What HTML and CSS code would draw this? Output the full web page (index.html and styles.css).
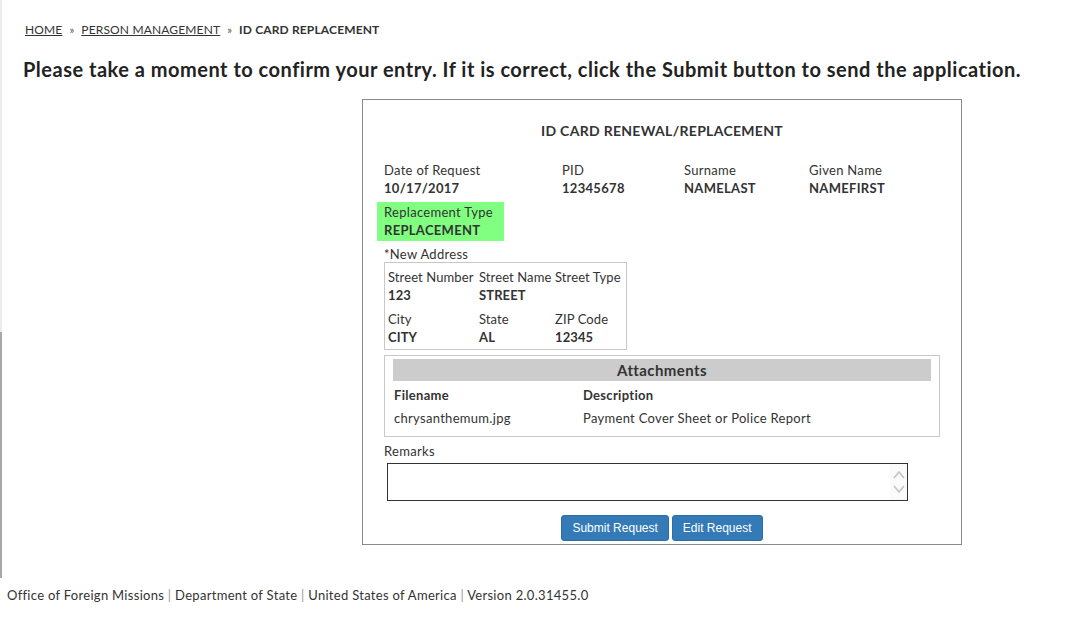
FILE: index.html
```html
<!DOCTYPE html>
<html>
<head>
<meta charset="utf-8">
<link rel="stylesheet" href="styles.css">
</head>
<body>
<div class="page">
  <nav class="breadcrumb">
    <a href="#">HOME</a><span class="sep">»</span><a href="#">PERSON MANAGEMENT</a><span class="sep">»</span><strong>ID CARD REPLACEMENT</strong>
  </nav>
  <h1 class="intro">Please take a moment to confirm your entry. If it is correct, click the Submit button to send the application.</h1>

  <section class="card">
    <h2 class="card-title">ID CARD RENEWAL/REPLACEMENT</h2>
    <div class="info-row">
      <div class="field"><div class="lbl">Date of Request</div><div class="val">10/17/2017</div></div>
      <div class="field"><div class="lbl">PID</div><div class="val">12345678</div></div>
      <div class="field"><div class="lbl">Surname</div><div class="val">NAMELAST</div></div>
      <div class="field"><div class="lbl">Given Name</div><div class="val">NAMEFIRST</div></div>
    </div>
    <div class="highlight">
      <div class="lbl">Replacement Type</div>
      <div class="val">REPLACEMENT</div>
    </div>
    <div class="addr-caption">*New Address</div>
    <div class="addr-box">
      <div class="lbl">Street Number</div><div class="lbl">Street Name</div><div class="lbl">Street Type</div>
      <div class="val">123</div><div class="val">STREET</div><div class="val"></div>
      <div class="lbl gap">City</div><div class="lbl gap">State</div><div class="lbl gap">ZIP Code</div>
      <div class="val">CITY</div><div class="val">AL</div><div class="val">12345</div>
    </div>
    <div class="attach-box">
      <div class="attach-head">Attachments</div>
      <div class="attach-grid">
        <div class="th">Filename</div><div class="th">Description</div>
        <div class="td">chrysanthemum.jpg</div><div class="td">Payment Cover Sheet or Police Report</div>
      </div>
    </div>
    <div class="remarks-lbl">Remarks</div>
    <div class="remarks-wrap">
      <textarea class="remarks"></textarea>
      <div class="scroll">
        <svg width="14" height="12" viewBox="0 0 14 12"><path d="M2 9 L7 3 L12 9" fill="none" stroke="#c4c4c4" stroke-width="1.6"/></svg>
        <svg width="14" height="12" viewBox="0 0 14 12"><path d="M2 3 L7 9 L12 3" fill="none" stroke="#c4c4c4" stroke-width="1.6"/></svg>
      </div>
    </div>
    <div class="actions">
      <button class="btn">Submit Request</button>
      <button class="btn">Edit Request</button>
    </div>
  </section>

  <footer class="footer">
    Office of Foreign Missions <span class="bar">|</span> Department of State <span class="bar">|</span> United States of America <span class="bar">|</span> Version 2.0.31455.0
  </footer>
</div>
</body>
</html>
```

FILE: styles.css
```css
html {
  background:
    linear-gradient(#ececec, #ececec) 0 0 / 2px 332px no-repeat,
    linear-gradient(#a8a8a8, #a8a8a8) 0 332px / 2px 246px no-repeat,
    #fff;
}
body {
  margin: 0;
  font-family: Lato, "Open Sans", sans-serif;
  color: #333;
  font-size: 13px;
  letter-spacing: 0.3px;
}
.page {
  display: flex;
  flex-direction: column;
}
.breadcrumb {
  margin: 21px 0 0 25px;
  font-size: 12px;
  line-height: 18px;
  color: #333;
  letter-spacing: 0.15px;
}
.breadcrumb a {
  color: #333;
  text-decoration: underline;
}
.breadcrumb .sep {
  margin: 0 7px;
  font-size: 11px;
  color: #555;
}
.breadcrumb strong {
  font-weight: 700;
}
.intro {
  margin: 18px 0 0 23px;
  font-size: 20px;
  line-height: 24px;
  font-weight: 700;
  color: #222;
  letter-spacing: 0.5px;
}
.card {
  margin: 18px 0 0 362px;
  width: 600px;
  box-sizing: border-box;
  border: 1px solid #8a8a8a;
  padding: 22px 21px 3px 21px;
}
.card-title {
  margin: 0;
  text-align: center;
  font-size: 14px;
  line-height: 18px;
  font-weight: 700;
  letter-spacing: 0.3px;
}
.lbl {
  font-size: 13px;
  line-height: 18px;
}
.val {
  font-size: 13px;
  line-height: 18px;
  font-weight: 700;
  min-height: 18px;
}
.info-row {
  margin-top: 21px;
  display: grid;
  grid-template-columns: 178px 122px 125px 1fr;
}
.highlight {
  margin: 5px 0 0 -7px;
  width: 127px;
  box-sizing: border-box;
  padding: 1px 7px 2px;
  background: #80ff80;
}
.addr-caption {
  margin-top: 5px;
  line-height: 16px;
}
.addr-box {
  width: 243px;
  box-sizing: border-box;
  border: 1px solid #c8c8c8;
  padding: 5px 3px 3px;
  display: grid;
  grid-template-columns: 91px 76px 1fr;
  white-space: nowrap;
  letter-spacing: 0.1px;
}
.addr-box .gap {
  margin-top: 6px;
}
.attach-box {
  margin-top: 5px;
  border: 1px solid #c8c8c8;
  padding: 3px 8px 9px;
}
.attach-head {
  background: #cccccc;
  text-align: center;
  font-weight: 700;
  font-size: 15px;
  line-height: 22px;
  letter-spacing: 0.4px;
}
.attach-grid {
  margin-top: 5px;
  display: grid;
  grid-template-columns: 189px 1fr;
  padding-left: 1px;
  row-gap: 5px;
}
.th {
  font-weight: 700;
  line-height: 18px;
}
.td {
  line-height: 18px;
}
.remarks-lbl {
  margin-top: 5px;
  line-height: 18px;
}
.remarks-wrap {
  position: relative;
  margin: 3px 0 0 3px;
  width: 521px;
  height: 38px;
}
.remarks {
  display: block;
  width: 100%;
  height: 100%;
  box-sizing: border-box;
  border: 1px solid #333;
  resize: none;
  overflow: hidden;
  margin: 0;
  font-family: inherit;
}
.scroll {
  position: absolute;
  right: 1px;
  top: 1px;
  bottom: 1px;
  width: 17px;
  background: #fafafa;
  display: flex;
  flex-direction: column;
  align-items: center;
  justify-content: center;
  gap: 2px;
}
.scroll svg {
  display: block;
}
.actions {
  margin-top: 14px;
  display: flex;
  justify-content: center;
  gap: 3px;
}
.btn {
  font-family: "Liberation Sans", Arial, sans-serif;
  font-size: 12px;
  letter-spacing: 0;
  color: #fff;
  background: #337ab7;
  border: 1px solid #2e6da4;
  border-radius: 3px;
  height: 26px;
  padding: 0 10px;
}
.footer {
  margin: 41px 0 0 7px;
  font-size: 13px;
  line-height: 18px;
  color: #333;
}
.footer .bar {
  color: #999;
}
```
